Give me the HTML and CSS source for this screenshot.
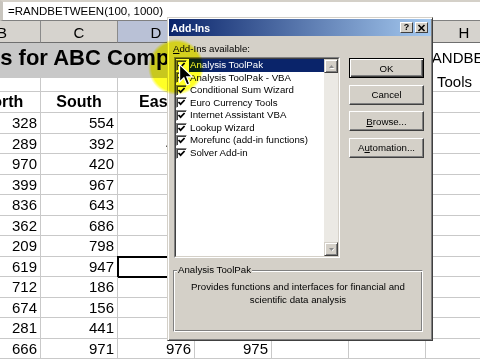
FILE: index.html
```html
<!DOCTYPE html>
<html lang="en">
<head>
    <meta charset="UTF-8">
    <meta name="viewport" content="width=device-width, initial-scale=1.0">
    <title>Excel - Add-Ins</title>
    <link rel="stylesheet" href="styles.css">
</head>
<body>
<div class="screen">
    <div class="formula-bar">=RANDBETWEEN(100, 1000)</div>

    <div class="sheet">
        <!-- column headers -->
        <div class="col-head">B</div>
        <div class="col-head">C</div>
        <div class="col-head selected">D</div>
        <div class="col-head">E</div>
        <div class="col-head">F</div>
        <div class="col-head">G</div>
        <div class="col-head">H</div>

        <!-- row 1: merged title -->
        <div class="title-cell">Sales for ABC Company</div>
        <div class="note-cell"><span class="note-first">RANDBETWEEN</span><span>Tools</span></div>

        <!-- row 2 -->
        <div></div><div></div><div></div><div></div><div></div><div></div>

        <!-- row 3: region names -->
        <div class="head">North</div>
        <div class="head">South</div>
        <div class="head">East</div>
        <div class="head">West</div>
        <div></div><div></div><div></div>

        <div class="num">328</div><div class="num">554</div><div class="num"></div><div class="num"></div><div></div><div></div><div></div>
        <div class="num">289</div><div class="num">392</div><div class="num">437</div><div class="num"></div><div></div><div></div><div></div>
        <div class="num">970</div><div class="num">420</div><div class="num"></div><div class="num"></div><div></div><div></div><div></div>
        <div class="num">399</div><div class="num">967</div><div class="num"></div><div class="num"></div><div></div><div></div><div></div>
        <div class="num">836</div><div class="num">643</div><div class="num"></div><div class="num"></div><div></div><div></div><div></div>
        <div class="num">362</div><div class="num">686</div><div class="num"></div><div class="num"></div><div></div><div></div><div></div>
        <div class="num">209</div><div class="num">798</div><div class="num"></div><div class="num"></div><div></div><div></div><div></div>
        <div class="num">619</div><div class="num">947</div><div class="num active"></div><div class="num"></div><div></div><div></div><div></div>
        <div class="num">712</div><div class="num">186</div><div class="num"></div><div class="num"></div><div></div><div></div><div></div>
        <div class="num">674</div><div class="num">156</div><div class="num"></div><div class="num"></div><div></div><div></div><div></div>
        <div class="num">281</div><div class="num">441</div><div class="num"></div><div class="num"></div><div></div><div></div><div></div>
        <div class="num">666</div><div class="num">971</div><div class="num">976</div><div class="num">975</div><div></div><div></div><div></div>
    </div>

    <div class="dialog">
        <div class="titlebar">
            <span class="title">Add-Ins</span>
            <span class="tb-btn">?</span>
            <span class="tb-btn">
                <svg width="9" height="8" viewBox="0 0 9 8"><path d="M1.5 1 L7.5 7 M7.5 1 L1.5 7" stroke="#000" stroke-width="1.6"/></svg>
            </span>
        </div>

        <div class="dialog-body">
            <div class="label"><u>A</u>dd-Ins available:</div>
            <div class="main-row">
                <div class="listbox">
                    <div class="list-inner">
                        <ul class="items">
                            <li class="item selected"><span class="check"><svg width="9" height="9" viewBox="0 0 9 9"><path d="M1.5 4 L3.6 6.2 L7.6 2" fill="none" stroke="#000" stroke-width="1.7"/></svg></span><span class="name">Analysis ToolPak</span></li>
                            <li class="item"><span class="check"><svg width="9" height="9" viewBox="0 0 9 9"><path d="M1.5 4 L3.6 6.2 L7.6 2" fill="none" stroke="#000" stroke-width="1.7"/></svg></span><span class="name">Analysis ToolPak - VBA</span></li>
                            <li class="item"><span class="check"><svg width="9" height="9" viewBox="0 0 9 9"><path d="M1.5 4 L3.6 6.2 L7.6 2" fill="none" stroke="#000" stroke-width="1.7"/></svg></span><span class="name">Conditional Sum Wizard</span></li>
                            <li class="item"><span class="check"><svg width="9" height="9" viewBox="0 0 9 9"><path d="M1.5 4 L3.6 6.2 L7.6 2" fill="none" stroke="#000" stroke-width="1.7"/></svg></span><span class="name">Euro Currency Tools</span></li>
                            <li class="item"><span class="check"><svg width="9" height="9" viewBox="0 0 9 9"><path d="M1.5 4 L3.6 6.2 L7.6 2" fill="none" stroke="#000" stroke-width="1.7"/></svg></span><span class="name">Internet Assistant VBA</span></li>
                            <li class="item"><span class="check"><svg width="9" height="9" viewBox="0 0 9 9"><path d="M1.5 4 L3.6 6.2 L7.6 2" fill="none" stroke="#000" stroke-width="1.7"/></svg></span><span class="name">Lookup Wizard</span></li>
                            <li class="item"><span class="check"><svg width="9" height="9" viewBox="0 0 9 9"><path d="M1.5 4 L3.6 6.2 L7.6 2" fill="none" stroke="#000" stroke-width="1.7"/></svg></span><span class="name">Morefunc (add-in functions)</span></li>
                            <li class="item"><span class="check"><svg width="9" height="9" viewBox="0 0 9 9"><path d="M1.5 4 L3.6 6.2 L7.6 2" fill="none" stroke="#000" stroke-width="1.7"/></svg></span><span class="name">Solver Add-in</span></li>
                        </ul>
                        <div class="scrollbar">
                            <div class="sb-btn"><svg width="7" height="5" viewBox="0 0 7 5"><path d="M1 4.5 L3.5 1.5 L6 4.5 Z" fill="#fff" transform="translate(0.8 0.6)"/><path d="M1 4 L3.5 1 L6 4 Z" fill="#8c8c8c"/></svg></div>
                            <div class="sb-track"></div>
                            <div class="sb-btn"><svg width="7" height="5" viewBox="0 0 7 5"><path d="M1 1 L3.5 4 L6 1 Z" fill="#fff" transform="translate(0.8 0.6)"/><path d="M1 1 L3.5 4 L6 1 Z" fill="#8c8c8c"/></svg></div>
                        </div>
                    </div>
                </div>
                <div class="buttons">
                    <button class="btn default">OK</button>
                    <button class="btn">Cancel</button>
                    <button class="btn"><u>B</u>rowse...</button>
                    <button class="btn">A<u>u</u>tomation...</button>
                </div>
            </div>
            <fieldset class="group">
                <legend>Analysis ToolPak</legend>
                <p>Provides functions and interfaces for financial and<br>scientific data analysis</p>
            </fieldset>
        </div>
    </div>

    <!-- screen-recorder cursor highlight -->
    <div class="spot"></div>
    <svg class="cursor" width="15" height="23" viewBox="0 0 13 20">
        <path d="M0.5 0.5 V15.5 L4.2 12 L6.8 18.2 L9.2 17.2 L6.7 11.2 H11.6 Z" fill="#000" stroke="#fff" stroke-width="1"/>
    </svg>
</div>
</body>
</html>
```

FILE: styles.css
```css
* {
    box-sizing: border-box;
}
html, body {
    margin: 0;
    background: #fff;
}
.screen {
    position: relative;
    width: 480px;
    height: 360px;
    overflow: hidden;
    font-family: "Liberation Sans", Arial, sans-serif;
    color: #000;
}

/* formula bar */
.formula-bar {
    height: 21px;
    border-top: 2px solid #d4d0c8;
    border-left: 3px solid #c8c5be;
    border-bottom: 1px solid #808080;
    padding: 0 0 0 5px;
    font-size: 11.5px;
    line-height: 18px;
    white-space: nowrap;
}

/* worksheet */
.sheet {
    display: grid;
    grid-template-columns: repeat(7, 77px);
    grid-template-rows: 22px 35px 14px 21px repeat(12, 20.5px);
    margin-left: -36px;
    font-size: 15px;
}
.sheet > div {
    border-right: 1px solid #c9c9c9;
    border-bottom: 1px solid #c9c9c9;
    white-space: nowrap;
}
.sheet > .col-head {
    background: #d6d3ce;
    border-right-color: #8a8a8a;
    border-bottom-color: #6f6f6f;
    display: flex;
    align-items: center;
    justify-content: center;
    padding-top: 1px;
}
.sheet > .col-head.selected {
    background: #b9c1d6;
}
.sheet > .title-cell {
    grid-column: 1 / 7;
    background: #c8c8c8;
    border: none;
    font-size: 22px;
    font-weight: bold;
    line-height: 25px;
    padding-top: 2px;
    text-indent: -9px;
}
.sheet > .note-cell {
    grid-column: 7;
    grid-row: 2 / 4;
    padding: 3px 0 0 11px;
    line-height: 24px;
    font-size: 15px;
}
.note-cell span {
    display: block;
}
.note-cell .note-first {
    margin-left: -16px;
}
.sheet > .head {
    font-weight: bold;
    font-size: 16px;
    display: flex;
    align-items: center;
    justify-content: center;
}
.sheet > .num {
    display: flex;
    align-items: center;
    justify-content: flex-end;
    padding-right: 3px;
}
.sheet > .active {
    outline: 2px solid #000;
    outline-offset: -1px;
}

/* dialog window */
.dialog {
    position: absolute;
    left: 167px;
    top: 17px;
    width: 266px;
    height: 324px;
    padding: 1px;
    background: #d4d0c8;
    border: 1px solid;
    border-color: #d4d0c8 #404040 #404040 #d4d0c8;
    box-shadow: inset 1px 1px #fff, inset -1px -1px #808080;
    font-size: 9.7px;
}
.titlebar {
    height: 17px;
    display: flex;
    align-items: center;
    padding: 0 3px 0 2px;
    background: linear-gradient(to right, #0a246a, #a6caf0);
}
.title {
    flex: 1;
    color: #fff;
    font-weight: bold;
    font-size: 10.5px;
}
.tb-btn {
    width: 13px;
    height: 11px;
    margin-left: 2px;
    display: flex;
    align-items: center;
    justify-content: center;
    background: #d4d0c8;
    border: 1px solid;
    border-color: #fff #404040 #404040 #fff;
    font-weight: bold;
    font-size: 9px;
    line-height: 9px;
}
.dialog-body {
    padding-left: 5px;
}
.label {
    height: 21px;
    padding-top: 7px;
    margin-left: -1px;
    line-height: 12px;
}
.main-row {
    display: flex;
    gap: 9px;
}
.listbox {
    width: 166px;
    height: 201px;
    border: 1px solid;
    border-color: #808080 #fff #fff #808080;
}
.list-inner {
    height: 100%;
    display: flex;
    background: #fff;
    border: 1px solid;
    border-color: #404040 #d4d0c8 #d4d0c8 #404040;
}
.items {
    flex: 1;
    list-style: none;
    margin: 0;
    padding: 0;
}
.item {
    height: 12.55px;
    display: flex;
    align-items: center;
}
.check {
    width: 11px;
    height: 11px;
    flex: none;
    background: #fff;
    border: 1px solid;
    border-color: #808080 #fff #fff #808080;
    box-shadow: inset 1px 1px #404040;
    display: flex;
    align-items: center;
    justify-content: center;
}
.name {
    flex: 1;
    margin-left: 2px;
    padding-left: 1px;
    height: 100%;
    line-height: 12.55px;
    white-space: nowrap;
}
.item.selected .name {
    background: #0a246a;
    color: #fff;
}
.scrollbar {
    width: 14px;
    display: flex;
    flex-direction: column;
}
.sb-btn {
    height: 14px;
    display: flex;
    align-items: center;
    justify-content: center;
    background: #d4d0c8;
    border: 1px solid;
    border-color: #d4d0c8 #404040 #404040 #d4d0c8;
    box-shadow: inset 1px 1px #fff, inset -1px -1px #808080;
}
.sb-track {
    flex: 1;
    background: #ebe9e4;
}
.buttons {
    display: flex;
    flex-direction: column;
    gap: 6.5px;
    margin-top: 1px;
}
.btn {
    width: 75px;
    height: 20px;
    padding: 0;
    font: inherit;
    color: #000;
    background: #d4d0c8;
    border: 1px solid;
    border-color: #fff #404040 #404040 #fff;
    box-shadow: inset -1px -1px #808080;
}
.btn.default {
    border-color: #000;
    box-shadow: inset 1px 1px #fff, inset -1px -1px #404040, inset -2px -2px #808080;
}
.group {
    width: 250px;
    height: 68px;
    margin: 6px 0 0 -1px;
    padding: 0;
    border: 1px solid;
    border-color: #808080 #fff #fff #808080;
    box-shadow: inset 1px 1px #fff, inset -1px -1px #808080;
}
.group legend {
    margin-left: 3px;
    padding: 0 1px;
    line-height: 12px;
    background: #d4d0c8;
}
.group p {
    margin: 0;
    padding-top: 5px;
    text-align: center;
    line-height: 12.5px;
}

/* cursor highlight from the screen recorder */
.spot {
    position: absolute;
    left: 148px;
    top: 39px;
    width: 56px;
    height: 56px;
    border-radius: 50%;
    background: radial-gradient(circle, rgba(255, 255, 0, 0.85) 62%, rgba(255, 255, 0, 0) 71%);
    mix-blend-mode: multiply;
}
.cursor {
    position: absolute;
    left: 179px;
    top: 64px;
}
```
